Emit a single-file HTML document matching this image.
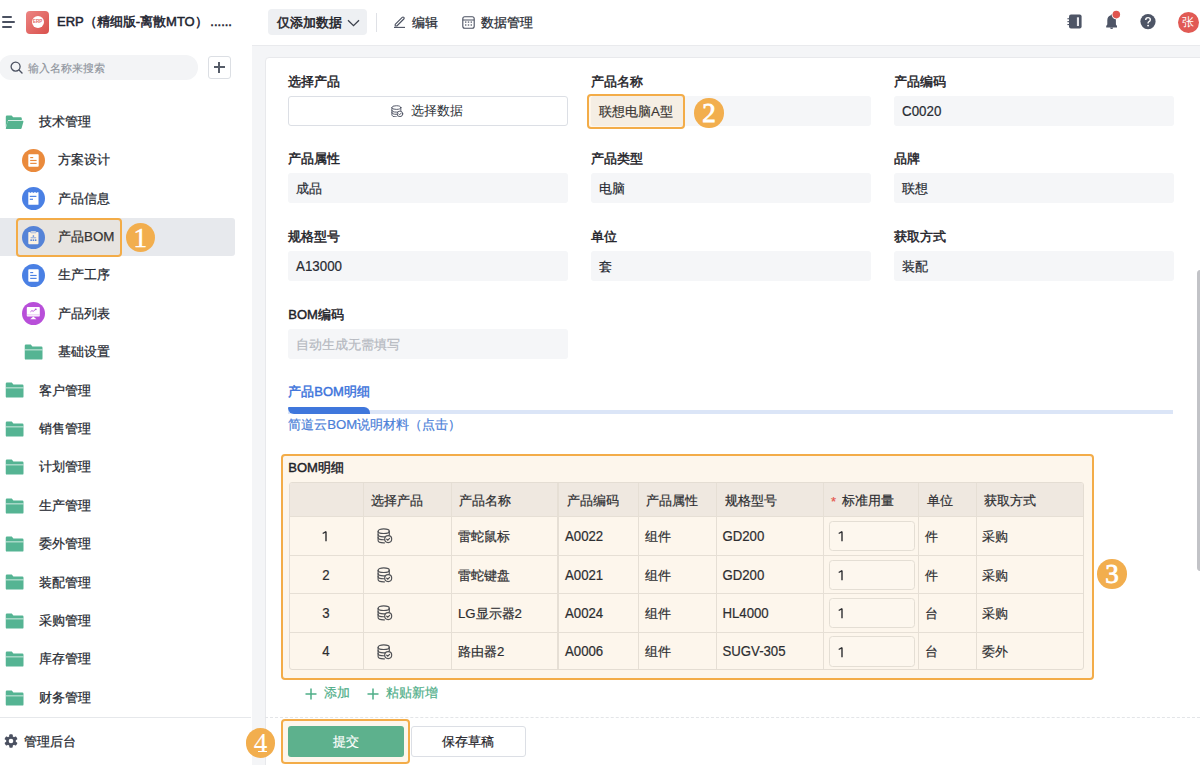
<!DOCTYPE html>
<html><head><meta charset="utf-8"><style>
*{margin:0;padding:0;box-sizing:border-box}
html,body{width:1200px;height:765px;overflow:hidden;background:#fff}
body{font-family:"Liberation Sans",sans-serif;color:#1f2329;position:relative}
.a{position:absolute}
.nw{white-space:nowrap}
.side{left:0;top:0;width:252.6px;height:765px;background:#fff;border-right:1px solid #e6e8eb}
.mt{position:absolute;font-size:13.33px;color:#272b33;line-height:20px;white-space:nowrap;-webkit-text-stroke:0.25px #272b33}
.main{left:252px;top:0;width:948px;height:765px;background:#f4f5f7}
.top{left:252px;top:0;width:948px;height:45.5px;background:#fff;border-bottom:1px solid #e9eaed}
.card{left:264.7px;top:57.2px;width:950px;height:720px;background:#fff;border:1px solid #e8e9ec;border-radius:4px}
.lbl{position:absolute;font-size:13px;color:#1f2329;line-height:16px;white-space:nowrap;-webkit-text-stroke:0.45px #1f2329}
.inp{position:absolute;width:279.5px;height:30.2px;background:#f5f6f8;border-radius:3px;font-size:13.3px;color:#272b33;line-height:31.2px;padding-left:7.8px;white-space:nowrap;-webkit-text-stroke:0.2px currentColor}
.badge{position:absolute;width:29.5px;height:29.5px;border-radius:50%;background:#f2ae4e;color:#fff;font-family:"Liberation Serif",serif;font-size:27px;line-height:30px;text-align:center;-webkit-text-stroke:0.5px #fff}
.ann{position:absolute;border:2.8px solid #f3ac48;border-radius:4px;background:rgba(242,165,60,0.07)}
.th{position:absolute;font-size:13px;color:#2d2e31;line-height:16px;white-space:nowrap;-webkit-text-stroke:0.2px currentColor}
.sy{display:inline-block;transform:scaleY(1.09);transform-origin:50% 60%}
.td{position:absolute;font-size:13.2px;color:#2d2e31;line-height:16px;white-space:nowrap;-webkit-text-stroke:0.2px currentColor}
</style></head><body>
<div class="a side">
<div class="a" style="left:2.2px;top:16.35px;width:9.4px;height:1.7px;background:#4b5161;border-radius:1px"></div>
<div class="a" style="left:2.2px;top:21.25px;width:13px;height:1.7px;background:#4b5161;border-radius:1px"></div>
<div class="a" style="left:2.2px;top:26.05px;width:9.4px;height:1.7px;background:#4b5161;border-radius:1px"></div>
<div class="a" style="left:26px;top:10.5px;width:23px;height:23px;border-radius:4px;background:linear-gradient(135deg,#ec8583,#d9504c)"></div>
<div class="a" style="left:31.5px;top:15.5px;width:12.5px;height:12.5px;border-radius:50%;background:#fff"></div>
<div class="a nw" style="left:31.5px;top:15.5px;width:12.5px;font-size:4.5px;font-weight:bold;color:#e06663;line-height:12.5px;text-align:center">ERP</div>
<div class="a nw" style="left:57px;top:13px;font-size:13px;color:#1f2531;line-height:18px;-webkit-text-stroke:0.5px #1f2531">ERP（精细版-离散MTO）&thinsp;......</div>
<div class="a" style="left:-1px;top:55px;width:199px;height:24.5px;border-radius:12.25px;background:#f3f4f6"></div>
<svg class="a" style="left:10px;top:61px" width="13" height="13" viewBox="0 0 13 13"><circle cx="5.6" cy="5.6" r="4.5" fill="none" stroke="#4b5161" stroke-width="1.3"/><line x1="9" y1="9" x2="12" y2="12" stroke="#4b5161" stroke-width="1.4" stroke-linecap="round"/></svg>
<div class="a nw" style="left:28.2px;top:59.5px;font-size:11.3px;color:#8f949d;line-height:16px;-webkit-text-stroke:0.15px #8f949d">输入名称来搜索</div>
<div class="a" style="left:207.5px;top:56px;width:23px;height:22.5px;border:1px solid #dcdfe4;border-radius:3px"></div>
<div class="a" style="left:213.5px;top:66.3px;width:11px;height:1.4px;background:#565c68"></div>
<div class="a" style="left:218.3px;top:61.5px;width:1.4px;height:11px;background:#565c68"></div>
<div class="a" style="left:0;top:218px;width:235px;height:37.5px;background:#e7e9ed;border-radius:0 3px 3px 0"></div>

<svg class="a" style="left:5px;top:114.60px" width="19" height="15" viewBox="0 0 19 15"><path d="M0.8 1.8Q0.8 0.6 2 0.6H6.6L8.2 2.2H15.6Q16.8 2.2 16.8 3.4V5H3.2L0.8 12Z" fill="#55b38f"/><path d="M3.6 5.8H17.8Q18.6 5.8 18.4 6.8L16.6 13.2Q16.4 14 15.6 14H1.4Q0.6 14 0.8 13.2L2.6 6.6Q2.8 5.8 3.6 5.8Z" fill="#55b38f"/></svg>
<div class="mt" style="left:39px;top:111.70px">技术管理</div>
<svg class="a" style="left:22.40px;top:148.80px" width="23" height="23" viewBox="0 0 23 23"><circle cx="11.5" cy="11.5" r="11.5" fill="#ea8a3c"/><rect x="6.3" y="5.2" width="10.4" height="12.5" rx="0.9" fill="#fff"/><rect x="8.2" y="8.0" width="3.0" height="1.15" fill="#ea8a3c"/><rect x="8.2" y="10.9" width="6.4" height="1.15" fill="#ea8a3c"/><rect x="8.2" y="13.8" width="6.4" height="1.15" fill="#ea8a3c"/></svg>
<div class="mt" style="left:58px;top:150.10px">方案设计</div>
<svg class="a" style="left:22.40px;top:187.20px" width="23" height="23" viewBox="0 0 23 23"><circle cx="11.5" cy="11.5" r="11.5" fill="#4a80e4"/><path d="M6.3 5.2H7.5L8.4 6L9.3 5.2H10.5L11.4 6L12.3 5.2H13.5L14.4 6L15.3 5.2H16.5V17.2Q16.5 17.7 16 17.7H6.8Q6.3 17.7 6.3 17.2Z" fill="#fff"/><rect x="7.8" y="8.8" width="6.6" height="1.15" fill="#4a80e4"/><rect x="7.8" y="11.7" width="3.2" height="1.15" fill="#4a80e4"/></svg>
<div class="mt" style="left:58px;top:188.50px">产品信息</div>
<svg class="a" style="left:22.40px;top:225.60px" width="23" height="23" viewBox="0 0 23 23"><circle cx="11.5" cy="11.5" r="11.5" fill="#4a80e4"/><rect x="6.3" y="5.9" width="10.2" height="12.3" rx="0.9" fill="#fdf8ef"/><rect x="8.6" y="5.1" width="5.6" height="1.7" rx="0.7" fill="#fdf8ef" stroke="#4a80e4" stroke-width="0.5"/><circle cx="11.4" cy="10" r="0.85" fill="#4a80e4"/><rect x="8.6" y="11.5" width="5.6" height="0.7" fill="#4a80e4"/><rect x="8.4" y="13.4" width="1.5" height="1.6" fill="#4a80e4"/><rect x="10.65" y="13.4" width="1.5" height="1.6" fill="#4a80e4"/><rect x="12.9" y="13.4" width="1.5" height="1.6" fill="#4a80e4"/></svg>
<div class="mt" style="left:58px;top:226.90px">产品BOM</div>
<svg class="a" style="left:22.40px;top:264.00px" width="23" height="23" viewBox="0 0 23 23"><circle cx="11.5" cy="11.5" r="11.5" fill="#4a80e4"/><rect x="6.3" y="5.2" width="10.4" height="12.5" rx="0.9" fill="#fff"/><rect x="8.2" y="8.0" width="3.0" height="1.15" fill="#4a80e4"/><rect x="8.2" y="10.9" width="6.4" height="1.15" fill="#4a80e4"/><rect x="8.2" y="13.8" width="6.4" height="1.15" fill="#4a80e4"/></svg>
<div class="mt" style="left:58px;top:265.30px">生产工序</div>
<svg class="a" style="left:22.40px;top:302.40px" width="23" height="23" viewBox="0 0 23 23"><circle cx="11.5" cy="11.5" r="11.5" fill="#b84fd9"/><rect x="4.8" y="5.1" width="13" height="9.4" rx="0.8" fill="#fff"/><rect x="4.8" y="12.6" width="13" height="0.6" fill="#d9a6ec"/><path d="M8.2 17.2L11.3 14.4L14.4 17.2Z" fill="#fff"/><path d="M8.4 9.9L9.9 8.6L11.2 9.3L13.3 7.6" fill="none" stroke="#b84fd9" stroke-width="0.9"/><circle cx="13.8" cy="7.3" r="0.9" fill="#b84fd9"/></svg>
<div class="mt" style="left:58px;top:303.70px">产品列表</div>
<svg class="a" style="left:24px;top:344.00px" width="19" height="16" viewBox="0 0 19 16"><path d="M0.75 1.8Q0.75 0.6 1.95 0.6H6.8L8.4 2.6H17.3Q18.5 2.6 18.5 3.8V14.4Q18.5 15.6 17.3 15.6H1.95Q0.75 15.6 0.75 14.4Z" fill="#55b493"/><rect x="0.75" y="5.45" width="17.75" height="0.85" fill="#e6f4ee"/></svg>
<div class="mt" style="left:58px;top:342.10px">基础设置</div>
<svg class="a" style="left:5px;top:382.40px" width="19" height="16" viewBox="0 0 19 16"><path d="M0.75 1.8Q0.75 0.6 1.95 0.6H6.8L8.4 2.6H17.3Q18.5 2.6 18.5 3.8V14.4Q18.5 15.6 17.3 15.6H1.95Q0.75 15.6 0.75 14.4Z" fill="#55b493"/><rect x="0.75" y="5.45" width="17.75" height="0.85" fill="#e6f4ee"/></svg>
<div class="mt" style="left:39px;top:380.50px">客户管理</div>
<svg class="a" style="left:5px;top:420.80px" width="19" height="16" viewBox="0 0 19 16"><path d="M0.75 1.8Q0.75 0.6 1.95 0.6H6.8L8.4 2.6H17.3Q18.5 2.6 18.5 3.8V14.4Q18.5 15.6 17.3 15.6H1.95Q0.75 15.6 0.75 14.4Z" fill="#55b493"/><rect x="0.75" y="5.45" width="17.75" height="0.85" fill="#e6f4ee"/></svg>
<div class="mt" style="left:39px;top:418.90px">销售管理</div>
<svg class="a" style="left:5px;top:459.20px" width="19" height="16" viewBox="0 0 19 16"><path d="M0.75 1.8Q0.75 0.6 1.95 0.6H6.8L8.4 2.6H17.3Q18.5 2.6 18.5 3.8V14.4Q18.5 15.6 17.3 15.6H1.95Q0.75 15.6 0.75 14.4Z" fill="#55b493"/><rect x="0.75" y="5.45" width="17.75" height="0.85" fill="#e6f4ee"/></svg>
<div class="mt" style="left:39px;top:457.30px">计划管理</div>
<svg class="a" style="left:5px;top:497.60px" width="19" height="16" viewBox="0 0 19 16"><path d="M0.75 1.8Q0.75 0.6 1.95 0.6H6.8L8.4 2.6H17.3Q18.5 2.6 18.5 3.8V14.4Q18.5 15.6 17.3 15.6H1.95Q0.75 15.6 0.75 14.4Z" fill="#55b493"/><rect x="0.75" y="5.45" width="17.75" height="0.85" fill="#e6f4ee"/></svg>
<div class="mt" style="left:39px;top:495.70px">生产管理</div>
<svg class="a" style="left:5px;top:536.00px" width="19" height="16" viewBox="0 0 19 16"><path d="M0.75 1.8Q0.75 0.6 1.95 0.6H6.8L8.4 2.6H17.3Q18.5 2.6 18.5 3.8V14.4Q18.5 15.6 17.3 15.6H1.95Q0.75 15.6 0.75 14.4Z" fill="#55b493"/><rect x="0.75" y="5.45" width="17.75" height="0.85" fill="#e6f4ee"/></svg>
<div class="mt" style="left:39px;top:534.10px">委外管理</div>
<svg class="a" style="left:5px;top:574.40px" width="19" height="16" viewBox="0 0 19 16"><path d="M0.75 1.8Q0.75 0.6 1.95 0.6H6.8L8.4 2.6H17.3Q18.5 2.6 18.5 3.8V14.4Q18.5 15.6 17.3 15.6H1.95Q0.75 15.6 0.75 14.4Z" fill="#55b493"/><rect x="0.75" y="5.45" width="17.75" height="0.85" fill="#e6f4ee"/></svg>
<div class="mt" style="left:39px;top:572.50px">装配管理</div>
<svg class="a" style="left:5px;top:612.80px" width="19" height="16" viewBox="0 0 19 16"><path d="M0.75 1.8Q0.75 0.6 1.95 0.6H6.8L8.4 2.6H17.3Q18.5 2.6 18.5 3.8V14.4Q18.5 15.6 17.3 15.6H1.95Q0.75 15.6 0.75 14.4Z" fill="#55b493"/><rect x="0.75" y="5.45" width="17.75" height="0.85" fill="#e6f4ee"/></svg>
<div class="mt" style="left:39px;top:610.90px">采购管理</div>
<svg class="a" style="left:5px;top:651.20px" width="19" height="16" viewBox="0 0 19 16"><path d="M0.75 1.8Q0.75 0.6 1.95 0.6H6.8L8.4 2.6H17.3Q18.5 2.6 18.5 3.8V14.4Q18.5 15.6 17.3 15.6H1.95Q0.75 15.6 0.75 14.4Z" fill="#55b493"/><rect x="0.75" y="5.45" width="17.75" height="0.85" fill="#e6f4ee"/></svg>
<div class="mt" style="left:39px;top:649.30px">库存管理</div>
<svg class="a" style="left:5px;top:689.60px" width="19" height="16" viewBox="0 0 19 16"><path d="M0.75 1.8Q0.75 0.6 1.95 0.6H6.8L8.4 2.6H17.3Q18.5 2.6 18.5 3.8V14.4Q18.5 15.6 17.3 15.6H1.95Q0.75 15.6 0.75 14.4Z" fill="#55b493"/><rect x="0.75" y="5.45" width="17.75" height="0.85" fill="#e6f4ee"/></svg>
<div class="mt" style="left:39px;top:687.70px">财务管理</div>
<div class="a" style="left:0;top:716.5px;width:251px;height:1px;background:#e6e8eb"></div>
<svg class="a" style="left:2.8px;top:733.4px" width="16" height="16" viewBox="0 0 16 16"><g transform="translate(8 8)" fill="#4b5161"><circle r="4.8"/><rect x="-1.75" y="-6.7" width="3.5" height="3.4" rx="0.9" transform="rotate(0)"/><rect x="-1.75" y="-6.7" width="3.5" height="3.4" rx="0.9" transform="rotate(60)"/><rect x="-1.75" y="-6.7" width="3.5" height="3.4" rx="0.9" transform="rotate(120)"/><rect x="-1.75" y="-6.7" width="3.5" height="3.4" rx="0.9" transform="rotate(180)"/><rect x="-1.75" y="-6.7" width="3.5" height="3.4" rx="0.9" transform="rotate(240)"/><rect x="-1.75" y="-6.7" width="3.5" height="3.4" rx="0.9" transform="rotate(300)"/></g><circle cx="8" cy="8" r="2.3" fill="#fff"/></svg>
<div class="mt" style="left:24.3px;top:731.6px;font-size:12.9px">管理后台</div>

</div>
<div class="a main"></div>
<div class="a top"></div>
<div class="a card"></div>
<div class="a" style="left:268px;top:9px;width:99px;height:26px;border-radius:4px;background:#eef0f3"></div>
<div class="a nw" style="left:277px;top:12.6px;font-size:13.33px;color:#1f2329;line-height:20px;-webkit-text-stroke:0.5px #1f2329">仅添加数据</div>
<svg class="a" style="left:347px;top:18.5px" width="13" height="8" viewBox="0 0 13 8"><path d="M1 1.2L6.5 6.6L12 1.2" fill="none" stroke="#3b404b" stroke-width="1.3"/></svg>
<div class="a" style="left:376px;top:13px;width:1px;height:19px;background:#dfe1e6"></div>
<svg class="a" style="left:393px;top:15px" width="13" height="13" viewBox="0 0 13 13"><path d="M2.2 9.4L9.2 2.4Q10 1.6 10.8 2.4Q11.6 3.2 10.8 4L3.8 11H2.2Z" fill="none" stroke="#4b5161" stroke-width="1.1" stroke-linejoin="round"/><line x1="1" y1="12.4" x2="12" y2="12.4" stroke="#4b5161" stroke-width="1.1"/></svg>
<div class="a nw" style="left:412.3px;top:12.8px;font-size:13.33px;color:#272b33;line-height:20px;-webkit-text-stroke:0.25px #272b33">编辑</div>
<svg class="a" style="left:461.5px;top:15.5px" width="13" height="13" viewBox="0 0 13 13"><rect x="0.8" y="0.8" width="11.4" height="11.4" rx="2" fill="none" stroke="#4b5161" stroke-width="1.1"/><line x1="0.8" y1="4" x2="12.2" y2="4" stroke="#4b5161" stroke-width="1"/><g fill="#4b5161"><rect x="3" y="5.5" width="1.4" height="1.2"/><rect x="5.8" y="5.5" width="1.4" height="1.2"/><rect x="8.6" y="5.5" width="1.4" height="1.2"/><rect x="3" y="8.4" width="1.4" height="1.2"/><rect x="5.8" y="8.4" width="1.4" height="1.2"/><rect x="8.6" y="8.4" width="1.4" height="1.2"/></g></svg>
<div class="a nw" style="left:480.7px;top:12.8px;font-size:13.33px;color:#272b33;line-height:20px;-webkit-text-stroke:0.25px #272b33">数据管理</div>
<svg class="a" style="left:1066px;top:14px" width="17" height="15" viewBox="0 0 17 15"><rect x="3" y="0.6" width="12.6" height="14" rx="2" fill="#4e5566"/><rect x="10.9" y="3.3" width="2.1" height="8.7" fill="#e9eaee"/><rect x="1.4" y="4.2" width="2" height="1.1" fill="#4e5566"/><rect x="1.4" y="7.1" width="2" height="1.1" fill="#4e5566"/><rect x="1.4" y="10" width="2" height="1.1" fill="#4e5566"/></svg>
<svg class="a" style="left:1104px;top:9px" width="18" height="22" viewBox="0 0 18 22"><path d="M7.6 5.2Q8.3 5.2 8.4 6.2Q11.9 7.2 11.9 11.2V15.6L13 17.1V18.4H2.2V17.1L3.3 15.6V11.2Q3.3 7.2 6.8 6.2Q6.9 5.2 7.6 5.2Z" fill="#4e5566"/><path d="M6.1 18.4H9.1Q9.1 20.1 7.6 20.1Q6.1 20.1 6.1 18.4Z" fill="#4e5566"/><circle cx="12.3" cy="5.6" r="4.7" fill="#fff"/><circle cx="12.3" cy="5.6" r="3.8" fill="#e0554f"/></svg>
<svg class="a" style="left:1140px;top:14px" width="16" height="16" viewBox="0 0 16 16"><circle cx="8" cy="7.6" r="7.6" fill="#4e5566"/><path d="M5.7 5.9Q5.7 3.6 8 3.6Q10.3 3.6 10.3 5.7Q10.3 6.9 9 7.6Q8.1 8.1 8.1 9.1V9.4" fill="none" stroke="#fff" stroke-width="1.4"/><circle cx="8.1" cy="11.6" r="0.95" fill="#fff"/></svg>
<div class="a" style="left:1177.5px;top:11.5px;width:21.2px;height:21.2px;border-radius:50%;background:#e15a54"></div>
<div class="a nw" style="left:1177.5px;top:11.5px;width:21.2px;font-size:12px;color:#fff;line-height:21.2px;text-align:center">张</div>

<div class="lbl" style="left:288.3px;top:73.5px">选择产品</div>
<div class="a" style="left:288.3px;top:95.6px;width:279.5px;height:30.5px;border:1px solid #dcdfe5;border-radius:3px;background:#fff"></div>
<svg class="a" style="left:390.8px;top:104.6px" width="12.8" height="12.8" viewBox="0 0 16 16"><g fill="none" stroke="#4b5161" stroke-width="1.15" stroke-linecap="round"><ellipse cx="6.7" cy="3.2" rx="5.6" ry="2.3"/><path d="M1.1 3.2V12.6Q1.1 14.9 6.7 14.9H7.4"/><path d="M12.3 3.2V6.9"/><path d="M1.1 6.6Q1.1 8.9 6.7 8.9H7.9"/><path d="M1.1 9.4Q1.1 11.7 6.7 11.7H7.6"/><circle cx="11.2" cy="11.1" r="3.5"/><path d="M9.7 11.2L10.8 12.2L12.6 10.3"/></g></svg>
<div class="a nw" style="left:410.5px;top:101.1px;font-size:13px;color:#2b2f36;line-height:20px">选择数据</div>
<div class="lbl" style="left:591.3px;top:73.5px">产品名称</div>
<div class="inp" style="left:591.3px;top:95.6px">联想电脑A型</div>
<div class="lbl" style="left:894.3px;top:73.5px">产品编码</div>
<div class="inp" style="left:894.3px;top:95.6px"><span class="sy">C0020</span></div>
<div class="lbl" style="left:288.3px;top:151.20000000000002px">产品属性</div>
<div class="inp" style="left:288.3px;top:173.3px">成品</div>
<div class="lbl" style="left:591.3px;top:151.20000000000002px">产品类型</div>
<div class="inp" style="left:591.3px;top:173.3px">电脑</div>
<div class="lbl" style="left:894.3px;top:151.20000000000002px">品牌</div>
<div class="inp" style="left:894.3px;top:173.3px">联想</div>
<div class="lbl" style="left:288.3px;top:228.9px">规格型号</div>
<div class="inp" style="left:288.3px;top:251.0px"><span class="sy">A13000</span></div>
<div class="lbl" style="left:591.3px;top:228.9px">单位</div>
<div class="inp" style="left:591.3px;top:251.0px">套</div>
<div class="lbl" style="left:894.3px;top:228.9px">获取方式</div>
<div class="inp" style="left:894.3px;top:251.0px">装配</div>
<div class="lbl" style="left:288.3px;top:306.7px">BOM编码</div>
<div class="inp" style="left:288.3px;top:328.8px;color:#b4b8bf">自动生成无需填写</div>
<div class="a nw" style="left:288.3px;top:383.5px;font-size:13px;color:#3d74db;line-height:16px;-webkit-text-stroke:0.45px #3d74db">产品BOM明细</div>
<div class="a" style="left:288.3px;top:410.4px;width:885px;height:3.6px;background:#dbe5f7"></div>
<div class="a" style="left:288.3px;top:406.5px;width:81.8px;height:7.5px;background:#3f77dc;border-radius:1px 6px 0 6px"></div>
<div class="a nw" style="left:288.3px;top:417.3px;font-size:13.2px;color:#4a80d8;line-height:16px;-webkit-text-stroke:0.2px #4a80d8">简道云BOM说明材料（点击）</div>

<div class="a" style="left:280.8px;top:454.2px;width:813px;height:225.8px;border:2.8px solid #f3ac48;border-radius:4px;background:#fdf6ec"></div>
<div class="a nw" style="left:288.3px;top:459.6px;font-size:13px;color:#1f2329;line-height:16px;-webkit-text-stroke:0.45px #1f2329">BOM明细</div>
<div class="a" style="left:288.6px;top:482.2px;width:795.9px;height:188.3px;border:1px solid #e4ddd3;border-radius:3px;background:#fdf6ec;overflow:hidden">
<div class="a" style="left:0;top:0;width:100%;height:33.1px;background:#efe8e0"></div>
<div class="a" style="left:0;top:33.1px;width:100%;height:1px;background:#e6dfd5"></div>
<div class="a" style="left:0;top:72.0px;width:100%;height:1px;background:#e6dfd5"></div>
<div class="a" style="left:0;top:110.3px;width:100%;height:1px;background:#e6dfd5"></div>
<div class="a" style="left:0;top:148.6px;width:100%;height:1px;background:#e6dfd5"></div>
<div class="a" style="left:73.2px;top:0;width:1px;height:100%;background:#e6dfd5"></div>
<div class="a" style="left:161.2px;top:0;width:1px;height:100%;background:#e6dfd5"></div>
<div class="a" style="left:267.9px;top:0;width:2px;height:100%;background:#e6dfd5"></div>
<div class="a" style="left:348.6px;top:0;width:1px;height:100%;background:#e6dfd5"></div>
<div class="a" style="left:426.6px;top:0;width:1px;height:100%;background:#e6dfd5"></div>
<div class="a" style="left:533.6px;top:0;width:1px;height:100%;background:#e6dfd5"></div>
<div class="a" style="left:628.6px;top:0;width:1px;height:100%;background:#e6dfd5"></div>
<div class="a" style="left:686.1px;top:0;width:1px;height:100%;background:#e6dfd5"></div>
</div>
<div class="th" style="left:371.3px;top:492.5px">选择产品</div>
<div class="th" style="left:459.3px;top:492.5px">产品名称</div>
<div class="th" style="left:567px;top:492.5px">产品编码</div>
<div class="th" style="left:646.25px;top:492.5px">产品属性</div>
<div class="th" style="left:724.5px;top:492.5px">规格型号</div>
<div class="th" style="left:842.4px;top:492.5px">标准用量</div>
<div class="th" style="left:926.7px;top:492.5px">单位</div>
<div class="th" style="left:983.9px;top:492.5px">获取方式</div>
<div class="th" style="left:831px;top:493.5px;color:#e5574f">*</div>
<svg class="a" style="left:322.3px;top:530.8px" width="6" height="11" viewBox="0 0 6 11"><path d="M4 0.5V10.2M4.1 0.7L0.7 2.5" stroke="#2d2e31" stroke-width="1.4" fill="none"/></svg>
<svg class="a" style="left:376.5px;top:528.4px" width="16" height="16" viewBox="0 0 16 16"><g fill="none" stroke="#505256" stroke-width="1.15" stroke-linecap="round"><ellipse cx="6.7" cy="3.2" rx="5.6" ry="2.3"/><path d="M1.1 3.2V12.6Q1.1 14.9 6.7 14.9H7.4"/><path d="M12.3 3.2V6.9"/><path d="M1.1 6.6Q1.1 8.9 6.7 8.9H7.9"/><path d="M1.1 9.4Q1.1 11.7 6.7 11.7H7.6"/><circle cx="11.2" cy="11.1" r="3.5"/><path d="M9.7 11.2L10.8 12.2L12.6 10.3"/></g></svg>
<div class="td" style="left:458px;top:528.9px">雷蛇鼠标</div>
<div class="td" style="left:565px;top:528.9px"><span class="sy">A0022</span></div>
<div class="td" style="left:645px;top:528.9px">组件</div>
<div class="td" style="left:722.5px;top:528.9px"><span class="sy">GD200</span></div>
<div class="a" style="left:829.4px;top:520.6px;width:85.2px;height:30.6px;border:1px solid #e4ded4;border-radius:3.5px;background:#fdf7ee"></div>
<svg class="a" style="left:837.7px;top:531.2px" width="6" height="11" viewBox="0 0 6 11"><path d="M4 0.5V10.2M4.1 0.7L0.7 2.5" stroke="#2d2e31" stroke-width="1.4" fill="none"/></svg>
<div class="td" style="left:924.7px;top:528.9px">件</div>
<div class="td" style="left:982px;top:528.9px">采购</div>
<div class="td" style="left:313.3px;width:25px;text-align:center;top:567.5px"><span class="sy">2</span></div>
<svg class="a" style="left:376.5px;top:567.0px" width="16" height="16" viewBox="0 0 16 16"><g fill="none" stroke="#505256" stroke-width="1.15" stroke-linecap="round"><ellipse cx="6.7" cy="3.2" rx="5.6" ry="2.3"/><path d="M1.1 3.2V12.6Q1.1 14.9 6.7 14.9H7.4"/><path d="M12.3 3.2V6.9"/><path d="M1.1 6.6Q1.1 8.9 6.7 8.9H7.9"/><path d="M1.1 9.4Q1.1 11.7 6.7 11.7H7.6"/><circle cx="11.2" cy="11.1" r="3.5"/><path d="M9.7 11.2L10.8 12.2L12.6 10.3"/></g></svg>
<div class="td" style="left:458px;top:567.5px">雷蛇键盘</div>
<div class="td" style="left:565px;top:567.5px"><span class="sy">A0021</span></div>
<div class="td" style="left:645px;top:567.5px">组件</div>
<div class="td" style="left:722.5px;top:567.5px"><span class="sy">GD200</span></div>
<div class="a" style="left:829.4px;top:559.5px;width:85.2px;height:30.6px;border:1px solid #e4ded4;border-radius:3.5px;background:#fdf7ee"></div>
<svg class="a" style="left:837.7px;top:570.1px" width="6" height="11" viewBox="0 0 6 11"><path d="M4 0.5V10.2M4.1 0.7L0.7 2.5" stroke="#2d2e31" stroke-width="1.4" fill="none"/></svg>
<div class="td" style="left:924.7px;top:567.5px">件</div>
<div class="td" style="left:982px;top:567.5px">采购</div>
<div class="td" style="left:313.3px;width:25px;text-align:center;top:605.8px"><span class="sy">3</span></div>
<svg class="a" style="left:376.5px;top:605.2px" width="16" height="16" viewBox="0 0 16 16"><g fill="none" stroke="#505256" stroke-width="1.15" stroke-linecap="round"><ellipse cx="6.7" cy="3.2" rx="5.6" ry="2.3"/><path d="M1.1 3.2V12.6Q1.1 14.9 6.7 14.9H7.4"/><path d="M12.3 3.2V6.9"/><path d="M1.1 6.6Q1.1 8.9 6.7 8.9H7.9"/><path d="M1.1 9.4Q1.1 11.7 6.7 11.7H7.6"/><circle cx="11.2" cy="11.1" r="3.5"/><path d="M9.7 11.2L10.8 12.2L12.6 10.3"/></g></svg>
<div class="td" style="left:458px;top:605.8px">LG显示器2</div>
<div class="td" style="left:565px;top:605.8px"><span class="sy">A0024</span></div>
<div class="td" style="left:645px;top:605.8px">组件</div>
<div class="td" style="left:722.5px;top:605.8px"><span class="sy">HL4000</span></div>
<div class="a" style="left:829.4px;top:597.8px;width:85.2px;height:30.6px;border:1px solid #e4ded4;border-radius:3.5px;background:#fdf7ee"></div>
<svg class="a" style="left:837.7px;top:608.4px" width="6" height="11" viewBox="0 0 6 11"><path d="M4 0.5V10.2M4.1 0.7L0.7 2.5" stroke="#2d2e31" stroke-width="1.4" fill="none"/></svg>
<div class="td" style="left:924.7px;top:605.8px">台</div>
<div class="td" style="left:982px;top:605.8px">采购</div>
<div class="td" style="left:313.3px;width:25px;text-align:center;top:644.2px"><span class="sy">4</span></div>
<svg class="a" style="left:376.5px;top:643.8px" width="16" height="16" viewBox="0 0 16 16"><g fill="none" stroke="#505256" stroke-width="1.15" stroke-linecap="round"><ellipse cx="6.7" cy="3.2" rx="5.6" ry="2.3"/><path d="M1.1 3.2V12.6Q1.1 14.9 6.7 14.9H7.4"/><path d="M12.3 3.2V6.9"/><path d="M1.1 6.6Q1.1 8.9 6.7 8.9H7.9"/><path d="M1.1 9.4Q1.1 11.7 6.7 11.7H7.6"/><circle cx="11.2" cy="11.1" r="3.5"/><path d="M9.7 11.2L10.8 12.2L12.6 10.3"/></g></svg>
<div class="td" style="left:458px;top:644.2px">路由器2</div>
<div class="td" style="left:565px;top:644.2px"><span class="sy">A0006</span></div>
<div class="td" style="left:645px;top:644.2px">组件</div>
<div class="td" style="left:722.5px;top:644.2px"><span class="sy">SUGV-305</span></div>
<div class="a" style="left:829.4px;top:636.1px;width:85.2px;height:30.6px;border:1px solid #e4ded4;border-radius:3.5px;background:#fdf7ee"></div>
<svg class="a" style="left:837.7px;top:646.7px" width="6" height="11" viewBox="0 0 6 11"><path d="M4 0.5V10.2M4.1 0.7L0.7 2.5" stroke="#2d2e31" stroke-width="1.4" fill="none"/></svg>
<div class="td" style="left:924.7px;top:644.2px">台</div>
<div class="td" style="left:982px;top:644.2px">委外</div>
<div class="badge" style="left:1097.3px;top:559px;-webkit-text-stroke:0.85px #fff">3</div>
<svg class="a" style="left:305px;top:688px" width="12" height="12" viewBox="0 0 12 12"><path d="M6 0.5V11.5M0.5 6H11.5" stroke="#4fae88" stroke-width="1.5"/></svg>
<div class="a nw" style="left:324px;top:685px;font-size:13px;color:#4fae88;line-height:16px;-webkit-text-stroke:0.2px #4fae88">添加</div>
<svg class="a" style="left:367.3px;top:688px" width="12" height="12" viewBox="0 0 12 12"><path d="M6 0.5V11.5M0.5 6H11.5" stroke="#4fae88" stroke-width="1.5"/></svg>
<div class="a nw" style="left:386.2px;top:685px;font-size:13px;color:#4fae88;line-height:16px;-webkit-text-stroke:0.2px #4fae88">粘贴新增</div>
<div class="a" style="left:265px;top:716.5px;width:935px;height:0;border-top:1px dashed #e3e5e8"></div>
<div class="a" style="left:281.2px;top:718.7px;width:128.8px;height:45.8px;border:2.8px solid #f3ac48;border-radius:4px;background:#fdf6ec"></div>
<div class="a" style="left:288px;top:726.2px;width:115.7px;height:30.8px;border-radius:3px;background:#5db18d"></div>
<div class="a nw" style="left:288px;top:733.6px;width:115.7px;text-align:center;font-size:13px;color:#fff;line-height:16px;-webkit-text-stroke:0.2px #fff">提交</div>
<div class="a" style="left:411.2px;top:726.2px;width:114.5px;height:30.8px;border:1px solid #dcdfe5;border-radius:3px;background:#fff"></div>
<div class="a nw" style="left:411.2px;top:733.6px;width:114.5px;text-align:center;font-size:13px;color:#1f2329;line-height:16px;-webkit-text-stroke:0.2px #1f2329">保存草稿</div>
<div class="badge" style="left:245.8px;top:728.3px;-webkit-text-stroke:0.15px #fff">4</div><div class="a" style="left:258.3px;top:750.9px;width:8.6px;height:1.3px;background:#fff"></div>
<div class="ann" style="left:16.2px;top:217.9px;width:105.7px;height:39.2px;background:rgba(242,165,60,0.07)"></div>
<div class="badge" style="left:125.6px;top:222.5px">1</div>
<div class="ann" style="left:586.7px;top:93.7px;width:98.3px;height:35.5px;background:rgba(242,165,60,0.10)"></div>
<div class="badge" style="left:694.2px;top:98.4px;-webkit-text-stroke:0.85px #fff">2</div>
<div class="a" style="left:1196.6px;top:270.4px;width:7px;height:300.6px;border-radius:3.5px;background:#c2c3c7"></div>
</body></html>
